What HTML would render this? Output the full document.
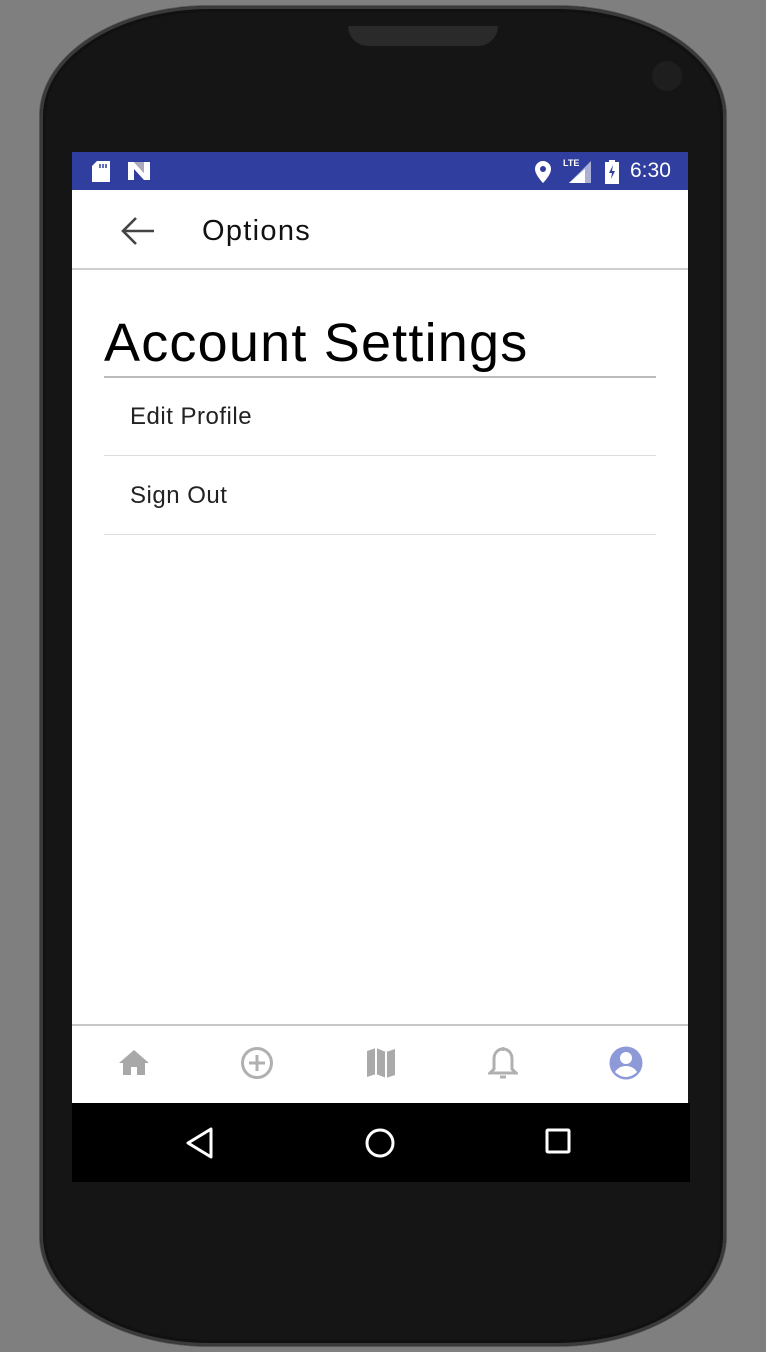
<!DOCTYPE html>
<html><head><meta charset="utf-8"><style>
html,body{margin:0;padding:0}
body{width:766px;height:1352px;background:#7f7f7f;position:relative;overflow:hidden;font-family:"Liberation Sans",sans-serif}
.phone{position:absolute;left:40px;top:6px;width:686px;height:1340px;background:#151515;border-radius:170px/110px;box-shadow:inset 0 0 0 3px #3a3a3a,inset 0 0 0 6px #111,0 0 0 1px #555}
.speaker{position:absolute;left:308px;top:20px;width:150px;height:20px;background:#2a2a2a;border-radius:0 0 20px 20px}
.cam{position:absolute;left:612px;top:55px;width:30px;height:30px;border-radius:50%;background:#1e1e1e}
.screen{position:absolute;left:72px;top:152px;width:616px;height:951px;background:#fff}
.status{position:absolute;left:0;top:0;width:616px;height:38px;background:#303f9f}
.toolbar{position:absolute;left:0;top:38px;width:616px;height:78px;border-bottom:2px solid #cfcfcf}
.title{position:absolute;left:130px;top:25px;font-size:29px;letter-spacing:1.3px;color:#111}
h1{position:absolute;left:32px;top:164px;margin:0;font-weight:normal;font-size:54px;letter-spacing:1.2px;color:#000;line-height:1}
.l{position:absolute;left:32px;width:552px;height:0}
.item{position:absolute;left:58px;font-size:24px;letter-spacing:0.5px;color:#222}
.tabs{position:absolute;left:0;top:872px;width:616px;height:79px;border-top:2px solid #c8c8c8}
.nav{position:absolute;left:72px;top:1103px;width:618px;height:79px;background:#000}
</style></head><body>
<div class="phone"><div class="speaker"></div><div class="cam"></div></div>
<div class="screen">
 <div class="status">
  <svg style="position:absolute;left:20px;top:9px" width="18" height="21"><path d="M5 0h13v21H0V5z" fill="#fff"/><path d="M8 3v4M11 3v4M14 3v4" stroke="#303f9f" stroke-width="1.5"/></svg>
  <svg style="position:absolute;left:56px;top:10px" width="22" height="18"><path d="M0 0h6l10 11V0h6v18h-6L6 7v11H0z" fill="#fff"/><path d="M6 0l10 11V0" fill="#aab"/></svg>
  <svg style="position:absolute;left:463px;top:9px" width="16" height="22"><path d="M8 0a8 8 0 0 1 8 8c0 6-8 14-8 14S0 14 0 8a8 8 0 0 1 8-8z" fill="#fff"/><circle cx="8" cy="8" r="3" fill="#303f9f"/></svg>
  <div style="position:absolute;left:491px;top:6px;color:#fff;font-size:9px;font-weight:bold">LTE</div>
  <svg style="position:absolute;left:491px;top:9px" width="28" height="22"><path d="M28 0v22H6z" fill="#aab0d8"/><path d="M22 8v14H6l16-14z" fill="#fff"/></svg>
  <svg style="position:absolute;left:533px;top:8px" width="14" height="24"><path d="M4 0h6v2h4v22H0V2h4z" fill="#fff"/><path d="M8 5l-4 8h3l-1 6 4-8H7z" fill="#303f9f"/></svg>
  <div style="position:absolute;left:558px;top:7px;color:#fff;font-size:21px">6:30</div>
 </div>
 <div class="toolbar">
  <svg style="position:absolute;left:48px;top:26px" width="36" height="30"><path d="M34 15H4M16 2L3 15l13 13" stroke="#444" stroke-width="2.6" fill="none"/></svg>
  <div class="title">Options</div>
 </div>
 <h1>Account Settings</h1>
 <div class="l" style="top:224px;border-top:2px solid #bbb"></div>
 <div class="item" style="top:251px">Edit Profile</div>
 <div class="l" style="top:303px;border-top:1px solid #ddd"></div>
 <div class="item" style="top:330px">Sign Out</div>
 <div class="l" style="top:382px;border-top:1px solid #ddd"></div>
 <div class="tabs">
  <svg style="position:absolute;left:46px;top:22px" width="32" height="30"><path d="M16 2L1 15h4v12h8v-8h6v8h8V15h4z" fill="#a8a8a8"/></svg>
  <svg style="position:absolute;left:168px;top:20px" width="34" height="34"><circle cx="17" cy="17" r="14.5" stroke="#b0b0b0" stroke-width="3" fill="none"/><path d="M17 9v16M9 17h16" stroke="#b0b0b0" stroke-width="3"/></svg>
  <svg style="position:absolute;left:292px;top:20px" width="34" height="34"><path d="M3 5l9-3 10 4 9-3v26l-9 3-10-4-9 3z" fill="#aaa"/><path d="M12 2v26M22 6v26" stroke="#fff" stroke-width="2"/></svg>
  <svg style="position:absolute;left:416px;top:20px" width="30" height="36"><path d="M15 3c-6 0-9 5-9 10v10l-4 4h26l-4-4V13c0-5-3-10-9-10z" stroke="#b0b0b0" stroke-width="3" fill="none"/><circle cx="15" cy="3" r="2" fill="#b0b0b0"/><path d="M12 31h6" stroke="#b0b0b0" stroke-width="3"/></svg>
  <svg style="position:absolute;left:536px;top:19px" width="36" height="36"><circle cx="18" cy="18" r="16.5" fill="#8e99d8"/><circle cx="18" cy="13" r="6" fill="#fff"/><path d="M7 27c3-5 8-6 11-6s8 1 11 6c-3 3-7 5-11 5s-8-2-11-5z" fill="#fff"/></svg>
 </div>
</div>
<div class="nav">
 <svg style="position:absolute;left:112px;top:22px" width="32" height="36"><path d="M27 4v28L4 18z" stroke="#fff" stroke-width="3" fill="none" stroke-linejoin="round"/></svg>
 <svg style="position:absolute;left:290px;top:22px" width="36" height="36"><circle cx="18" cy="18" r="13" stroke="#fff" stroke-width="3" fill="none"/></svg>
 <svg style="position:absolute;left:472px;top:24px" width="30" height="30"><rect x="3" y="3" width="22" height="22" rx="1" stroke="#fff" stroke-width="3" fill="none"/></svg>
</div>
</body></html>
